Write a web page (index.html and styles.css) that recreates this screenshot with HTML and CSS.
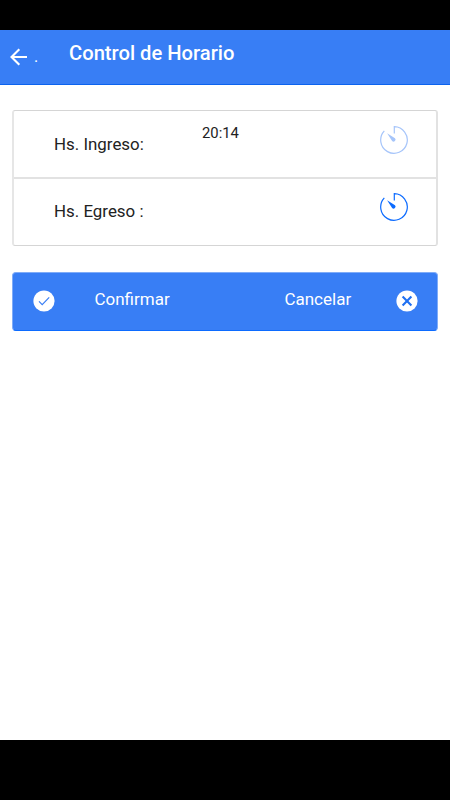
FILE: index.html
```html
<!DOCTYPE html>
<html lang="es">
<head>
    <meta charset="UTF-8">
    <meta name="viewport" content="width=device-width, initial-scale=1.0">
    <title>Control de Horario</title>
    <link rel="stylesheet" href="styles.css">
</head>
<body>
    <div class="screen">
        <header class="bar">
            <svg class="back" viewBox="0 0 18 18">
                <path d="M17 9H2M9.3 1.2L1.5 9l7.8 7.8" fill="none" stroke="#fff" stroke-width="2.1"/>
            </svg>
            <span class="dot">.</span>
            <h1>Control de Horario</h1>
        </header>

        <main class="content">
            <!-- Horarios -->
            <div class="list">
                <div class="item">
                    <span class="label">Hs. Ingreso:</span>
                    <span class="time">20:14</span>
                    <svg class="timer disabled" viewBox="0 0 28 28">
                        <path d="M14.3 7.6V0.7A13.3 13.3 0 1 1 4.3 4.9" fill="none" stroke="currentColor" stroke-width="1.2"/>
                        <path d="M7.1 7.2L15 12.3A1.9 1.9 0 1 1 12.1 15Z" fill="currentColor"/>
                    </svg>
                </div>
                <div class="item">
                    <span class="label">Hs. Egreso :</span>
                    <span class="time"></span>
                    <svg class="timer" viewBox="0 0 28 28">
                        <path d="M14.3 7.6V0.7A13.3 13.3 0 1 1 4.3 4.9" fill="none" stroke="currentColor" stroke-width="1.2"/>
                        <path d="M7.1 7.2L15 12.3A1.9 1.9 0 1 1 12.1 15Z" fill="currentColor"/>
                    </svg>
                </div>
            </div>

            <!-- Botones -->
            <div class="actions">
                <svg class="icon" viewBox="0 0 22 22">
                    <circle cx="11" cy="11" r="10.6" fill="#fff"/>
                    <path d="M6 11.4l3.2 3.2 7-7.2" fill="none" stroke="#387ef5" stroke-width="1.2"/>
                </svg>
                <span class="confirm">Confirmar</span>
                <span class="cancel">Cancelar</span>
                <svg class="icon" viewBox="0 0 22 22">
                    <circle cx="11" cy="11" r="10.6" fill="#fff"/>
                    <path d="M6.6 6.6l8.8 8.8M15.4 6.6l-8.8 8.8" stroke="#1f70f2" stroke-width="2.1"/>
                </svg>
            </div>
        </main>
    </div>
</body>
</html>
```
FILE: styles.css
```css
* {
    box-sizing: border-box;
}
body {
    margin: 0;
    padding: 30px 0 60px;
    height: 800px;
    background: #000;
    font-family: Roboto, sans-serif;
    color: #222;
}
.screen {
    height: 710px;
    background: #fff;
}
svg {
    display: block;
    flex: none;
}
.bar {
    display: flex;
    height: 55px;
    padding-left: 10px;
    background: #387ef5;
    border-bottom: 1px solid #0c63ee;
    color: #fff;
}
.back {
    width: 18px;
    height: 18px;
    margin-top: 18px;
}
.dot {
    width: 41px;
    margin-top: 17px;
    padding-left: 6px;
    font-size: 16px;
    line-height: 20px;
}
.bar h1 {
    margin: 11px 0 0;
    font-size: 20.2px;
    font-weight: 500;
    line-height: 24px;
}
.content {
    padding: 25px 12px 0;
}
.list {
    border: 1px solid #d5d5d5;
    border-width: 1px 2px;
    border-left-color: #e6e6e6;
    border-right-color: #e2e2e2;
    border-radius: 3px;
    height: 136px;
}
.item {
    display: flex;
    height: 68px;
    padding-left: 40px;
}
.item:first-child {
    border-bottom: 2px solid #e2e2e2;
}
.item + .item {
    margin-top: -1px;
}
.label {
    width: 148px;
    margin-top: 23px;
    font-size: 16.9px;
    line-height: 20px;
}
.time {
    width: 177.5px;
    margin-top: 12px;
    font-size: 14.8px;
    line-height: 20px;
}
.timer {
    width: 28px;
    height: 28px;
    margin-top: 15px;
    color: #0c6bff;
}
.disabled {
    color: #a6c5fa;
}
.actions {
    display: flex;
    height: 59px;
    margin-top: 26px;
    padding-left: 20px;
    background: #387ef5;
    border: 1px solid #7facf8;
    border-bottom-color: #0c6bff;
    border-radius: 4px;
    color: #fff;
    font-size: 17px;
    line-height: 20px;
}
.icon {
    width: 22px;
    height: 22px;
    margin-top: 17.4px;
}
.confirm {
    width: 210px;
    margin-top: 16px;
    padding-left: 39.4px;
}
.cancel {
    width: 130.6px;
    margin-top: 16px;
    padding-left: 19.4px;
}
```
